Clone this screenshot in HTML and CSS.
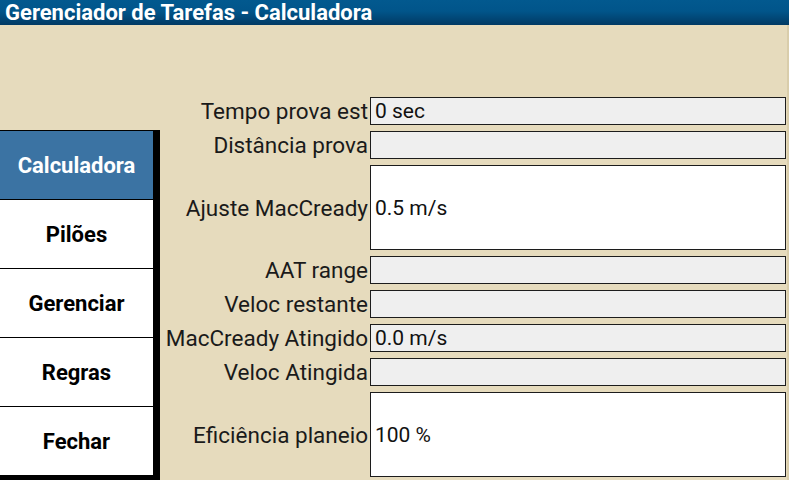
FILE: index.html
```html
<!DOCTYPE html>
<html lang="pt">
<head>
<meta charset="utf-8">
<title>Gerenciador de Tarefas - Calculadora</title>
<link rel="stylesheet" href="styles.css">
</head>
<body>
<div class="window">
  <header class="titlebar">Gerenciador de Tarefas - Calculadora</header>
  <main class="content">
    <nav class="tabs">
      <div class="tab active">Calculadora</div>
      <div class="tab">Pilões</div>
      <div class="tab">Gerenciar</div>
      <div class="tab">Regras</div>
      <div class="tab">Fechar</div>
    </nav>
    <section class="form">
      <div class="label">Tempo prova est</div><div class="field ro">0 sec</div>
      <div class="label">Distância prova</div><div class="field ro"></div>
      <div class="label tall">Ajuste MacCready</div><div class="field edit tall">0.5 m/s</div>
      <div class="label">AAT range</div><div class="field ro"></div>
      <div class="label">Veloc restante</div><div class="field ro"></div>
      <div class="label">MacCready Atingido</div><div class="field ro">0.0 m/s</div>
      <div class="label">Veloc Atingida</div><div class="field ro"></div>
      <div class="label tall">Eficiência planeio</div><div class="field edit tall">100 %</div>
    </section>
  </main>
</div>
</body>
</html>
```

FILE: styles.css
```css
* { box-sizing: border-box; }
html, body {
  margin: 0;
  padding: 0;
  width: 789px;
  height: 480px;
  overflow: hidden;
  background: #e6dbbd;
  font-family: Roboto, "Liberation Sans", sans-serif;
}
.window {
  width: 789px;
  height: 480px;
  display: flex;
  flex-direction: column;
}
.titlebar {
  height: 25px;
  line-height: 25px;
  padding-left: 5px;
  color: #ffffff;
  font-weight: 700;
  font-size: 22px;
  background: linear-gradient(to bottom, #02598f 0%, #01558a 45%, #013a64 100%);
  white-space: nowrap;
  overflow: hidden;
}
.content {
  flex: 1;
  display: flex;
  align-items: flex-start;
  border-right: 2px solid #d9cdab;
}
.tabs {
  width: 160px;
  margin-top: 105px;
  background: #000;
  padding: 1px 7px 5px 0;
  display: flex;
  flex-direction: column;
  gap: 1px;
}
.tab {
  height: 68px;
  background: #ffffff;
  color: #000;
  font-weight: 700;
  font-size: 22px;
  display: flex;
  align-items: center;
  justify-content: center;
}
.tab.active {
  background: #3b73a3;
  color: #ffffff;
}
.form {
  flex: 1;
  margin-top: 72px;
  display: grid;
  grid-template-columns: 1fr 416px;
  column-gap: 2px;
  row-gap: 6px;
  padding-right: 1px;
  font-size: 22.5px;
  color: #1a1a1a;
}
.label {
  height: 28px;
  display: flex;
  align-items: center;
  justify-content: flex-end;
  white-space: nowrap;
}
.field {
  height: 28px;
  border: 1px solid #1c1c1c;
  background: #efefef;
  display: flex;
  align-items: center;
  padding-left: 4px;
  color: #111;
  font-size: 21px;
  white-space: nowrap;
}
.field.edit {
  background: #ffffff;
}
.tall {
  height: 85px;
}
```
